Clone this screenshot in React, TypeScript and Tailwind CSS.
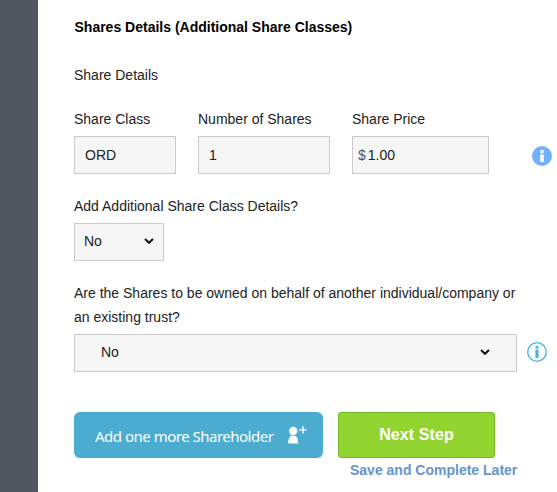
import React from 'react';

const box = 'h-[38px] border border-[#cbcbcb] bg-[#f6f6f6] flex items-center text-[#222]';

function Chevron() {
  return (
    <svg width="10" height="6" viewBox="0 0 10 6" fill="none" className="shrink-0">
      <path d="M1 1L5 4.8L9 1" stroke="#111" strokeWidth="2" />
    </svg>
  );
}

function InfoSolid() {
  return (
    <svg width="20" height="20" viewBox="0 0 20 20" className="mb-2 ml-[43px] shrink-0">
      <circle cx="10" cy="10" r="10" fill="#70b1fa" />
      <circle cx="10" cy="5.6" r="1.9" fill="#fff" />
      <path d="M8.2 8.5H11.8V16H8.2Z" fill="#fff" />
    </svg>
  );
}

function InfoOutline() {
  return (
    <svg width="20" height="20" viewBox="0 0 20 20" className="mb-[2px] ml-[10px] shrink-0">
      <circle cx="10" cy="10" r="9.3" fill="#fff" stroke="#43b3df" strokeWidth="1.3" />
      <path d="M8.5 4H11.5V6.6H8.5ZM8.5 7.6H11.5V16H8.5Z" fill="#43b3df" />
    </svg>
  );
}

function PersonPlus() {
  return (
    <svg width="20" height="18" viewBox="0 0 20 18" className="mb-[3px] ml-[14px] shrink-0" fill="#fff">
      <circle cx="5.2" cy="5" r="4.2" />
      <path d="M0.2 17.5C0.2 13 2 10 3.2 9.6C4.5 10.4 6 10.4 7.2 9.6C8.8 10.3 10.2 13 10.2 17.5Z" />
      <path d="M14.3 0.3H15.7V3.2H18.7V4.6H15.7V7.5H14.3V4.6H11.3V3.2H14.3Z" />
    </svg>
  );
}

export default function App() {
  return (
    <div className="flex h-[492px] w-[557px] overflow-hidden bg-white font-['Liberation_Sans',Arial,sans-serif] text-[14px] leading-6 text-[#222]">
      <aside className="w-[38px] shrink-0 bg-[#51555f]" />
      <main className="flex grow flex-col items-start pl-9 pt-[15px] whitespace-nowrap">
        <h1 className="pl-[0.5px] text-[14px] font-bold leading-6 text-black">Shares Details (Additional Share Classes)</h1>
        <p className="mt-6">Share Details</p>
        <div className="mt-5 flex items-end">
          <div className="w-[124px]">
            <div className="mb-[5px]">Share Class</div>
            <div className={`${box} w-[102px] pl-[10px]`}>ORD</div>
          </div>
          <div className="w-[154px]">
            <div className="mb-[5px]">Number of Shares</div>
            <div className={`${box} w-[132px] pl-[10px]`}>1</div>
          </div>
          <div className="w-[137px]">
            <div className="mb-[5px]">Share Price</div>
            <div className={`${box} pl-[5px]`}><span className="mr-[2px] text-[#51555f]">$</span>1.00</div>
          </div>
          <InfoSolid />
        </div>
        <p className="mt-5">Add Additional Share Class Details?</p>
        <div className={`${box} mt-[5px] w-[90px] justify-between pb-[2px] pl-[9px] pr-[9px]`}><span>No</span><Chevron /></div>
        <p className="mt-5">Are the Shares to be owned on behalf of another individual/company or<br />an existing trust?</p>
        <div className="mt-[5px] flex items-center">
          <div className={`${box} w-[443px] justify-between pb-[2px] pl-[26px] pr-[26px]`}><span>No</span><Chevron /></div>
          <InfoOutline />
        </div>
        <div className="mt-10 flex gap-[15px]">
          <button className="flex h-[46px] w-[249px] items-center rounded-[6px] bg-[#4baccf] pl-[21px] pt-[2px] font-['Noto_Sans',sans-serif] text-[15px] tracking-[-0.5px] text-white">
            <span className="w-[179px] text-left">Add one more Shareholder</span><PersonPlus />
          </button>
          <button className="h-[46px] w-[157px] rounded-[3px] border border-[#72bd27] bg-[#93d530] text-[16px] font-bold tracking-[0.1px] text-white">Next Step</button>
        </div>
        <a className="ml-[276px] font-bold text-[#6694ca]">Save and Complete Later</a>
      </main>
    </div>
  );
}
